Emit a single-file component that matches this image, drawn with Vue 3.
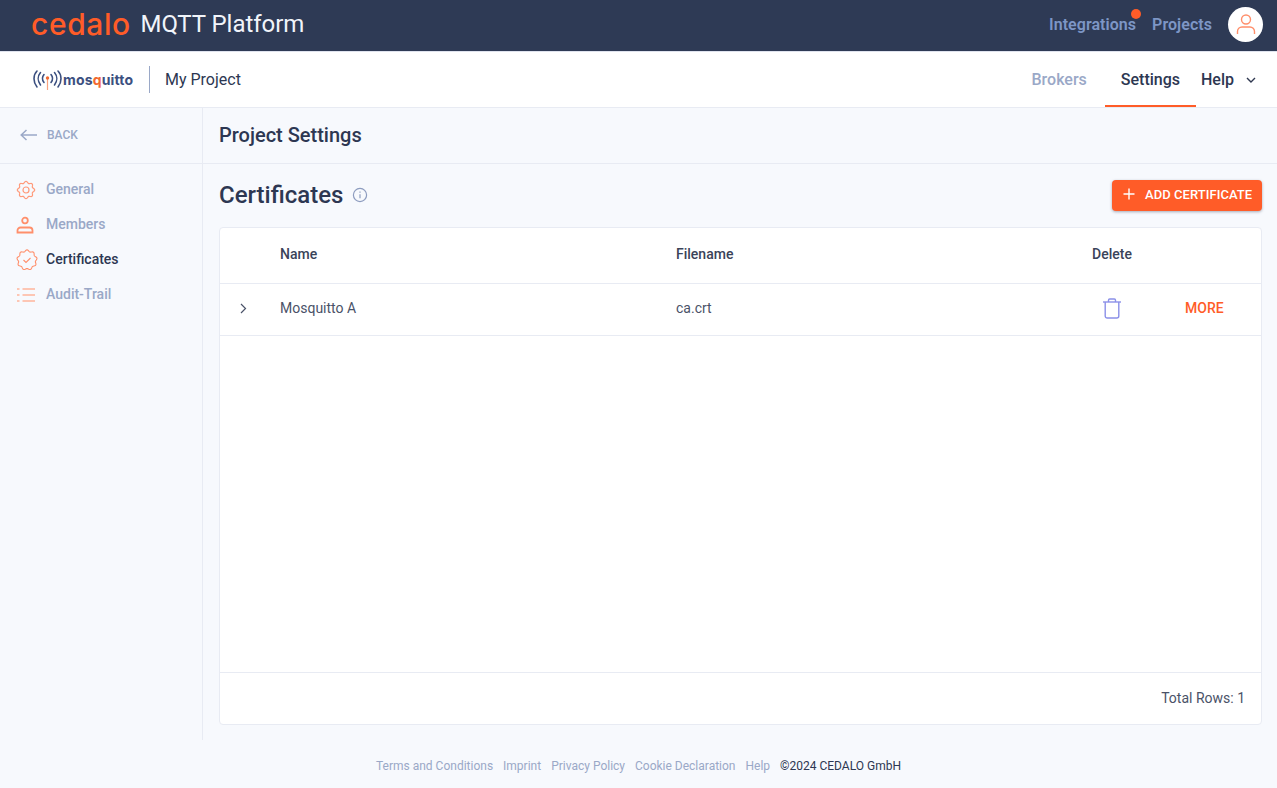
<script setup>
// wavy outline used by the gear and certificate badges
function badge(c, r, lobes, depth) {
  const pts = [];
  for (let i = 0; i < 96; i++) {
    const t = (i / 96) * Math.PI * 2;
    const rad = r + depth * Math.cos(lobes * t);
    pts.push((c + rad * Math.sin(t)).toFixed(2) + ' ' + (c - rad * Math.cos(t)).toFixed(2));
  }
  return 'M' + pts.join('L') + 'Z';
}

const gearPath = badge(10, 7.8, 8, 0.9);
const certPath = badge(11, 9.3, 9, 0.8);

const navItems = [
  { label: 'General', icon: 'gear' },
  { label: 'Members', icon: 'member' },
  { label: 'Certificates', icon: 'cert', active: true },
  { label: 'Audit-Trail', icon: 'list' }
];
const footerLinks = ['Terms and Conditions', 'Imprint', 'Privacy Policy', 'Cookie Declaration', 'Help'];
</script>

<template>
  <div class="page">
    <header class="topbar">
      <div class="brand">
        <span class="cedalo">cedalo</span>
        <span class="platform">MQTT Platform</span>
      </div>
      <nav class="topnav">
        <a class="toplink has-dot">Integrations<span class="dot"></span></a>
        <a class="toplink">Projects</a>
        <span class="avatar">
          <svg width="24" height="24" viewBox="0 0 24 24" fill="none" stroke="#ff8f6b" stroke-width="1.4">
            <circle cx="12" cy="7.5" r="4.5" />
            <path d="M3.5 22v-2.5a4.5 4.5 0 0 1 4.5-4.5h8a4.5 4.5 0 0 1 4.5 4.5V22" />
          </svg>
        </span>
      </nav>
    </header>

    <div class="subbar">
      <div class="subleft">
        <div class="mosquitto">
          <svg width="29" height="21" viewBox="0 0 29 21" fill="none" stroke="#3c5080" stroke-width="1.6" stroke-linecap="round">
            <path d="M4 2C0 6 0 13 4 18" />
            <path d="M7.5 3.5C4.5 7 4.5 12 7.5 16" />
            <path d="M11 5.5C9 8 9 11 11 13.5" />
            <path d="M25 2C29 6 29 13 25 18" />
            <path d="M21.5 3.5C24.5 7 24.5 12 21.5 16" />
            <path d="M18 5.5C20 8 20 11 18 13.5" />
            <path d="M14.5 10V21" stroke="#f8a27e" stroke-width="1.2" />
            <circle cx="14.5" cy="9" r="1.7" fill="#f26a32" stroke="none" />
          </svg>
          <span class="mosq-text">mos<span class="mosq-q">q</span>uitto</span>
        </div>
        <span class="project">My Project</span>
      </div>
      <nav class="subnav">
        <a class="sublink muted">Brokers</a>
        <a class="sublink current">Settings</a>
        <a class="sublink help">
          Help
          <svg width="10" height="6" viewBox="0 0 10 6" fill="none" stroke="#2f3850" stroke-width="1.4">
            <path d="M1 1l4 4 4-4" />
          </svg>
        </a>
      </nav>
    </div>

    <div class="body">
      <aside class="sidebar">
        <div class="back">
          <svg width="18" height="12" viewBox="0 0 18 12" fill="none" stroke="#9aa8c7" stroke-width="1.5">
            <path d="M17 6H1M6.5 1L1.2 6l5.3 5" />
          </svg>
          <span>BACK</span>
        </div>
        <ul class="menu">
          <li v-for="item in navItems" :key="item.label" class="menu-item" :class="{ active: item.active }">
            <span class="menu-icon">
              <svg v-if="item.icon === 'gear'" width="20" height="20" viewBox="0 0 20 20" fill="none" stroke="#ff9a7a" stroke-width="1.2">
                <path :d="gearPath" />
                <circle cx="10" cy="10" r="3" />
              </svg>
              <svg v-else-if="item.icon === 'member'" width="18" height="18" viewBox="0 0 18 18" fill="none" stroke="#ff8f6b" stroke-width="1.8">
                <circle cx="9" cy="4.5" r="2.8" />
                <path d="M1.5 16.5v-2a3 3 0 0 1 3-3h9a3 3 0 0 1 3 3v2z" />
              </svg>
              <svg v-else-if="item.icon === 'cert'" width="22" height="22" viewBox="0 0 22 22" fill="none" stroke="#ff8f6b" stroke-width="1.1">
                <path :d="certPath" />
                <path d="M7.5 11l2.5 2.5 4.5-4.500" />
              </svg>
              <svg v-else width="20" height="16" viewBox="0 0 20 16" fill="none" stroke="#ffb59c" stroke-width="1.4">
                <path d="M1 2h2.500M1 8h2.500M1 14h2.500M6.500 2H19M6.500 8H19M6.500 14H19" />
              </svg>
            </span>
            <span>{{ item.label }}</span>
          </li>
        </ul>
      </aside>

      <main class="content">
        <div class="content-title">Project Settings</div>
        <div class="content-main">
          <div class="section-head">
            <div class="section-title">
              <h2>Certificates</h2>
              <svg width="16" height="16" viewBox="0 0 16 16" fill="none" stroke="#8d9cbf" stroke-width="1.2">
                <circle cx="8" cy="8" r="6.6" />
                <path d="M8 7.2v4" />
                <path d="M8 4.5v1.2" />
              </svg>
            </div>
            <button class="add-btn">
              <svg width="12" height="12" viewBox="0 0 12 12" fill="none" stroke="#fff" stroke-width="1.4">
                <path d="M6 0.5v11M0.5 6h11" />
              </svg>
              ADD CERTIFICATE
            </button>
          </div>

          <div class="card">
            <div class="row head">
              <span class="c-exp"></span>
              <span class="c-name">Name</span>
              <span class="c-file">Filename</span>
              <span class="c-del">Delete</span>
              <span class="c-more"></span>
            </div>
            <div class="row item">
              <span class="c-exp">
                <svg width="7" height="11" viewBox="0 0 7 11" fill="none" stroke="#4a5268" stroke-width="1.2">
                  <path d="M1 1l4.5 4.5L1 10" />
                </svg>
              </span>
              <span class="c-name">Mosquitto A</span>
              <span class="c-file">ca.crt</span>
              <span class="c-del">
                <svg width="20" height="21" viewBox="0 0 20 21" fill="none" stroke="#8b90e8" stroke-width="1.4">
                  <path d="M1 4h18" />
                  <path d="M6.5 4V2.2A1.2 1.2 0 0 1 7.7 1h4.6a1.2 1.2 0 0 1 1.2 1.2V4" />
                  <path d="M3.2 4v14a2 2 0 0 0 2 2h9.6a2 2 0 0 0 2-2V4" />
                </svg>
              </span>
              <span class="c-more more">MORE</span>
            </div>
            <div class="card-fill"></div>
            <div class="card-foot">Total Rows: 1</div>
          </div>
        </div>
      </main>
    </div>

    <footer class="footer">
      <a v-for="link in footerLinks" :key="link">{{ link }}</a>
      <span class="copy">©2024 CEDALO GmbH</span>
    </footer>
  </div>
</template>

<style scoped>
.page {
  width: 1277px;
  height: 788px;
  display: flex;
  flex-direction: column;
  overflow: hidden;
  background: #f7f9fd;
  color: #2d3752;
  font-family: Roboto, "Liberation Sans", sans-serif;
}

.topbar {
  height: 51px;
  flex: none;
  box-sizing: border-box;
  display: flex;
  align-items: center;
  justify-content: space-between;
  padding: 0 14px 3px 31px;
  background: #2e3a55;
}

.brand {
  display: flex;
  align-items: center;
}

.cedalo {
  width: 109.5px;
  font-family: Inter, sans-serif;
  font-size: 30px;
  font-weight: 500;
  letter-spacing: 0.6px;
  color: #ff5c28;
}

.platform {
  font-size: 24px;
  letter-spacing: -0.05px;
  color: #f1f4fa;
}

.topnav {
  display: flex;
  align-items: center;
}

.toplink {
  position: relative;
  font-size: 16px;
  font-weight: 600;
  letter-spacing: 0.05px;
  color: #7d96c6;
}

.toplink.has-dot {
  margin-right: 16px;
}

.dot {
  position: absolute;
  top: -6px;
  right: -5px;
  width: 10px;
  height: 10px;
  border-radius: 50%;
  background: #ff5c28;
}

.avatar {
  width: 35px;
  height: 35px;
  margin-left: 16px;
  border-radius: 50%;
  background: #fff;
  display: flex;
  align-items: center;
  justify-content: center;
}

.subbar {
  height: 57px;
  flex: none;
  box-sizing: border-box;
  display: flex;
  align-items: stretch;
  justify-content: space-between;
  padding: 0 21px 0 33px;
  background: #fff;
  border-top: 1px solid #dfe3ee;
  border-bottom: 1px solid #e8ebf3;
}

.subleft {
  display: flex;
  align-items: center;
}

.mosquitto {
  width: 116px;
  height: 27px;
  display: flex;
  align-items: center;
  gap: 1px;
  border-right: 1px solid #9aa8c7;
}

.mosq-text {
  font-family: Inter, sans-serif;
  font-size: 14px;
  font-weight: 700;
  letter-spacing: 0.15px;
  color: #3c5080;
}

.mosq-q {
  color: #f26a32;
}

.project {
  margin-left: 15px;
  font-size: 16px;
  color: #2d3752;
}

.subnav {
  display: flex;
  align-items: stretch;
}

.sublink {
  display: flex;
  align-items: center;
  font-size: 16px;
  font-weight: 500;
}

.sublink.muted {
  margin-right: 18px;
  color: #9aa8c7;
}

.sublink.current {
  padding: 2px 16px 0;
  border-bottom: 2px solid #ff5c28;
  color: #2d3752;
}

.sublink.help {
  margin-left: 5px;
  gap: 12px;
  color: #2d3752;
}

.body {
  flex: 1;
  display: flex;
  min-height: 0;
}

.sidebar {
  width: 203px;
  flex: none;
  box-sizing: border-box;
  border-right: 1px solid #e8ebf3;
}

.back {
  height: 56px;
  box-sizing: border-box;
  display: flex;
  align-items: center;
  gap: 9px;
  padding: 0 0 1px 20px;
  border-bottom: 1px solid #e8ebf3;
  font-size: 12px;
  font-weight: 500;
  color: #9aa8c7;
}

.menu {
  list-style: none;
  margin: 0;
  padding: 7px 0 0;
}

.menu-item {
  height: 35px;
  display: flex;
  align-items: center;
  font-size: 14px;
  font-weight: 500;
  color: #9aa8c7;
}

.menu-item.active {
  color: #2d3752;
}

.menu-icon {
  width: 46px;
  padding: 2px 0 0 16px;
  box-sizing: border-box;
  display: flex;
  align-items: center;
}

.content {
  flex: 1;
  min-width: 0;
  display: flex;
  flex-direction: column;
}

.content-title {
  height: 56px;
  flex: none;
  box-sizing: border-box;
  display: flex;
  align-items: center;
  padding: 0 0 1px 16px;
  border-bottom: 1px solid #e8ebf3;
  font-size: 20px;
  font-weight: 500;
}

.content-main {
  flex: 1;
  min-height: 0;
  display: flex;
  flex-direction: column;
  padding: 15px 15px 15px 16px;
}

.section-head {
  height: 32px;
  flex: none;
  display: flex;
  align-items: center;
  justify-content: space-between;
  margin-bottom: 16px;
}

.section-title {
  display: flex;
  align-items: center;
  gap: 9px;
}

.section-title h2 {
  margin: 0;
  font-size: 24px;
  font-weight: 500;
}

.add-btn {
  width: 150px;
  height: 31px;
  display: flex;
  align-items: center;
  gap: 10px;
  padding: 0 0 2px 11px;
  border: none;
  border-radius: 4px;
  background: #ff5c28;
  box-shadow: 0 1px 3px rgba(45, 55, 82, 0.4);
  color: #fff;
  font-family: inherit;
  font-size: 13px;
  font-weight: 500;
  letter-spacing: 0.05px;
  white-space: nowrap;
}

.card {
  flex: 1;
  min-height: 0;
  display: flex;
  flex-direction: column;
  box-sizing: border-box;
  background: #fff;
  border: 1px solid #e8ebf3;
  border-radius: 4px;
}

.row {
  flex: none;
  box-sizing: border-box;
  display: flex;
  align-items: center;
  padding-bottom: 3px;
  border-bottom: 1px solid #e8ebf3;
  font-size: 14px;
}

.row.head {
  height: 56px;
  font-weight: 500;
  color: #3a4359;
}

.row.item {
  height: 52px;
  color: #4a5268;
}

.c-exp {
  width: 60px;
  padding-left: 20px;
  box-sizing: border-box;
  display: flex;
}

.c-name {
  width: 396px;
}

.c-file {
  width: 416px;
}

.c-del {
  width: 40px;
  display: flex;
  justify-content: center;
}

.c-more {
  margin-left: 53px;
}

.more {
  font-weight: 500;
  color: #ff5c28;
}

.card-fill {
  flex: 1;
}

.card-foot {
  height: 52px;
  flex: none;
  box-sizing: border-box;
  display: flex;
  align-items: center;
  justify-content: flex-end;
  padding: 0 16px 2px 0;
  border-top: 1px solid #e8ebf3;
  font-size: 14px;
  color: #4a5268;
}

.footer {
  height: 48px;
  flex: none;
  box-sizing: border-box;
  display: flex;
  align-items: center;
  justify-content: center;
  gap: 10px;
  padding-top: 4px;
  font-size: 12px;
  color: #9aa8c7;
}

.copy {
  color: #2d3752;
}
</style>

<style>
html,
body {
  margin: 0;
  background: #f7f9fd;
}
</style>
